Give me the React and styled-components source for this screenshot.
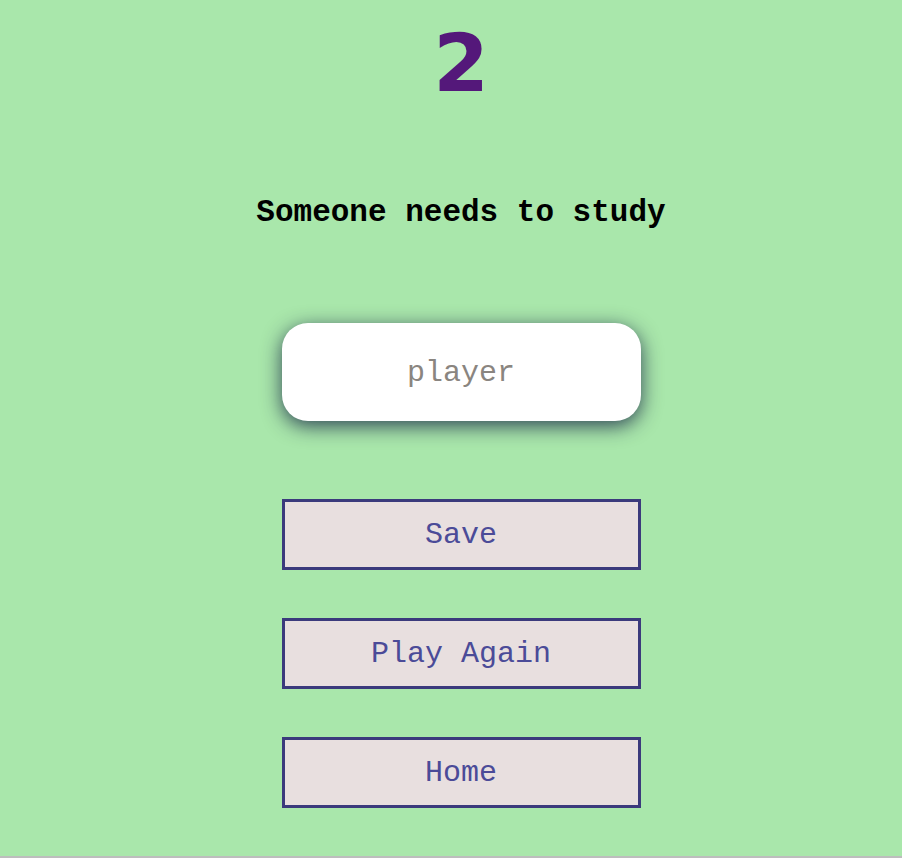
import React from 'react';
import styled, { createGlobalStyle } from 'styled-components';

const GlobalStyle = createGlobalStyle`
    html, body {
        margin: 0;
        padding: 0;
        background: #bdbdbd;
    }
`;

const App = () => {
    return (
        <>
            <GlobalStyle />
            <Page>
                <Score>2</Score>
                <Message>Someone needs to study</Message>
                <NameInput placeholder="player" />
                <ButtonList>
                    <MenuButton>Save</MenuButton>
                    <MenuButton>Play Again</MenuButton>
                    <MenuButton>Home</MenuButton>
                </ButtonList>
            </Page>
        </>
    );
};

const Page = styled.div`
    height: 856px;
    background: #a9e7ab;
    display: flex;
    flex-direction: column;
    align-items: center;
    padding-left: 20px;
    box-sizing: border-box;
    font-family: "Liberation Mono", "Courier New", monospace;
`;

const Score = styled.h1`
    margin: 16px 0 0 0;
    font-family: "DejaVu Sans", sans-serif;
    font-weight: bold;
    font-size: 80px;
    line-height: 96px;
    color: #54187a;
`;

const Message = styled.h2`
    margin: 81px 0 0 0;
    font-size: 31px;
    line-height: 40px;
    font-weight: bold;
    color: #000;
`;

const NameInput = styled.input`
    margin-top: 90px;
    width: 359px;
    height: 98px;
    box-sizing: border-box;
    border: none;
    border-radius: 26px;
    background: #fff;
    box-shadow: 0 5px 20px rgba(25, 40, 70, 0.85);
    text-align: center;
    font-family: "Liberation Mono", "Courier New", monospace;
    font-size: 30px;
    padding-top: 2px;
    outline: none;

    &::placeholder {
        color: #8a8580;
    }
`;

const ButtonList = styled.div`
    margin-top: 78px;
    display: flex;
    flex-direction: column;
    gap: 48px;
`;

const MenuButton = styled.button`
    width: 359px;
    height: 71px;
    box-sizing: border-box;
    border: 3px solid #3b3a7c;
    background: #e8dfdf;
    color: #4b4b98;
    font-family: "Liberation Mono", "Courier New", monospace;
    font-size: 30px;
    padding-top: 2px;
    cursor: pointer;
`;

export default App;
